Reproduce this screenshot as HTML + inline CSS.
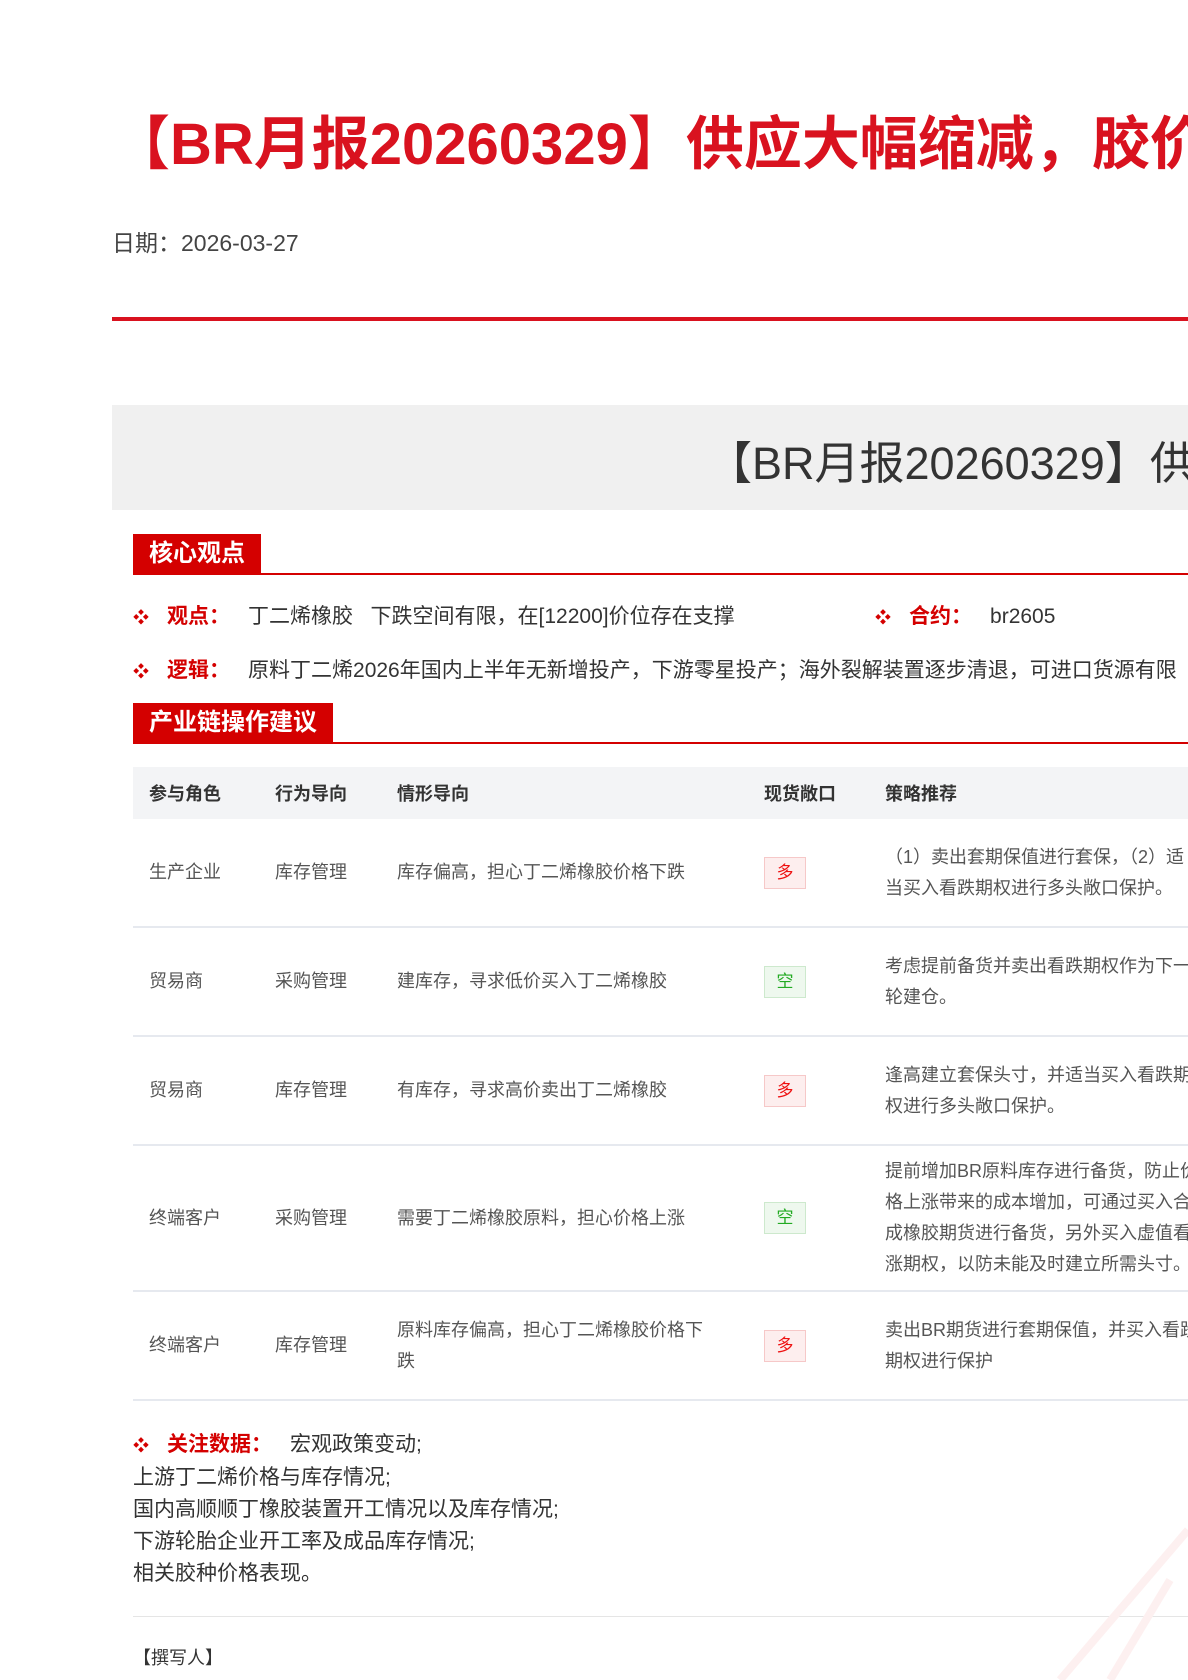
<!DOCTYPE html>
<html><head><meta charset="utf-8">
<style>
html,body{margin:0;padding:0;width:1188px;height:1680px;overflow:hidden;background:#fff;}
body{font-family:"Liberation Sans","Noto Sans CJK SC",sans-serif;color:#333;position:relative;}
.abs{position:absolute;white-space:nowrap;}
.title{left:112px;top:110px;font-size:58px;font-weight:bold;color:#d9121f;line-height:70px;}
.date{left:112px;top:224px;font-size:23px;color:#444;}
.redline{left:112px;top:317px;width:1200px;height:4px;background:#d9121f;}
.graybox{left:112px;top:405px;width:1200px;height:105px;background:#f0f0f0;}
.graybox span{position:absolute;left:595px;top:22px;font-size:45px;color:#333;white-space:nowrap;}
.badge{background:#d40000;color:#fff;font-weight:bold;font-size:24px;line-height:40px;padding:0 16px;}
.uline{height:2px;background:#d40000;width:1100px;}
.row{font-size:21px;color:#333;}
.row b{color:#d40000;font-weight:bold;margin-right:18px;}
.dot{color:#d40000;font-size:16px;margin-right:18px;}
table{position:absolute;left:133px;top:767px;border-collapse:collapse;font-size:18px;color:#555;table-layout:fixed;}
th{background:#f3f4f6;text-align:left;font-weight:bold;color:#333;height:52px;padding:0 0 0 16px;}
td{padding:0 0 0 16px;border-bottom:2px solid #e6e9ef;line-height:31px;}
.tag{display:inline-block;width:40px;height:30px;line-height:30px;text-align:center;font-size:17px;}
.duo{background:#fdeeee;border:1px solid #f6c8c8;color:#e11;}
.kong{background:#eef8ee;border:1px solid #cde9cd;color:#2a2;}
.foot{left:133px;font-size:21px;color:#333;}
</style></head><body>
<div class="abs title">【BR月报20260329】供应大幅缩减，胶价易涨难跌</div>
<div class="abs date">日期：2026-03-27</div>
<div class="abs redline"></div>
<div class="abs graybox"><span>【BR月报20260329】供应大幅缩减，胶价易涨难跌</span></div>

<div class="abs badge" style="left:133px;top:534px;">核心观点</div>
<div class="abs uline" style="left:133px;top:573px;"></div>
<div class="abs row" style="left:133px;top:600px;"><span class="dot">❖</span><b>观点：</b>丁二烯橡胶&nbsp;&nbsp;&nbsp;下跌空间有限，在[12200]价位存在支撑</div>
<div class="abs row" style="left:875px;top:600px;"><span class="dot">❖</span><b>合约：</b>br2605</div>
<div class="abs row" style="left:133px;top:654px;"><span class="dot">❖</span><b>逻辑：</b>原料丁二烯2026年国内上半年无新增投产，下游零星投产；海外裂解装置逐步清退，可进口货源有限</div>

<div class="abs badge" style="left:133px;top:703px;">产业链操作建议</div>
<div class="abs uline" style="left:133px;top:742px;"></div>

<table style="width:1120px">
<colgroup><col style="width:126px"><col style="width:122px"><col style="width:367px"><col style="width:121px"><col style="width:384px"></colgroup>
<tr><th>参与角色</th><th>行为导向</th><th>情形导向</th><th>现货敞口</th><th>策略推荐</th></tr>
<tr style="height:108px"><td>生产企业</td><td>库存管理</td><td>库存偏高，担心丁二烯橡胶价格下跌</td><td><span class="tag duo">多</span></td><td>（1）卖出套期保值进行套保，（2）适<br>当买入看跌期权进行多头敞口保护。</td></tr>
<tr style="height:109px"><td>贸易商</td><td>采购管理</td><td>建库存，寻求低价买入丁二烯橡胶</td><td><span class="tag kong">空</span></td><td>考虑提前备货并卖出看跌期权作为下一<br>轮建仓。</td></tr>
<tr style="height:109px"><td>贸易商</td><td>库存管理</td><td>有库存，寻求高价卖出丁二烯橡胶</td><td><span class="tag duo">多</span></td><td>逢高建立套保头寸，并适当买入看跌期<br>权进行多头敞口保护。</td></tr>
<tr style="height:146px"><td>终端客户</td><td>采购管理</td><td>需要丁二烯橡胶原料，担心价格上涨</td><td><span class="tag kong">空</span></td><td>提前增加BR原料库存进行备货，防止价<br>格上涨带来的成本增加，可通过买入合<br>成橡胶期货进行备货，另外买入虚值看<br>涨期权，以防未能及时建立所需头寸。</td></tr>
<tr style="height:109px"><td>终端客户</td><td>库存管理</td><td>原料库存偏高，担心丁二烯橡胶价格下<br>跌</td><td><span class="tag duo">多</span></td><td>卖出BR期货进行套期保值，并买入看跌<br>期权进行保护</td></tr>
</table>

<div class="abs foot" style="top:1428px;"><span class="dot">❖</span><b style="color:#d40000;margin-right:18px;">关注数据：</b>宏观政策变动;</div>
<div class="abs foot" style="top:1461px;">上游丁二烯价格与库存情况;</div>
<div class="abs foot" style="top:1493px;">国内高顺顺丁橡胶装置开工情况以及库存情况;</div>
<div class="abs foot" style="top:1525px;">下游轮胎企业开工率及成品库存情况;</div>
<div class="abs foot" style="top:1557px;">相关胶种价格表现。</div>
<div class="abs" style="left:133px;top:1616px;width:1100px;height:1px;background:#e5e5e5;"></div>
<div class="abs" style="left:133px;top:1644px;font-size:18px;color:#333;">【撰写人】</div>
<svg class="abs" style="left:1000px;top:1500px;" width="188" height="180"><path d="M188 30 L60 180 M170 80 L110 180" stroke="#fdf0f0" stroke-width="8" fill="none"/></svg>
</body></html>
